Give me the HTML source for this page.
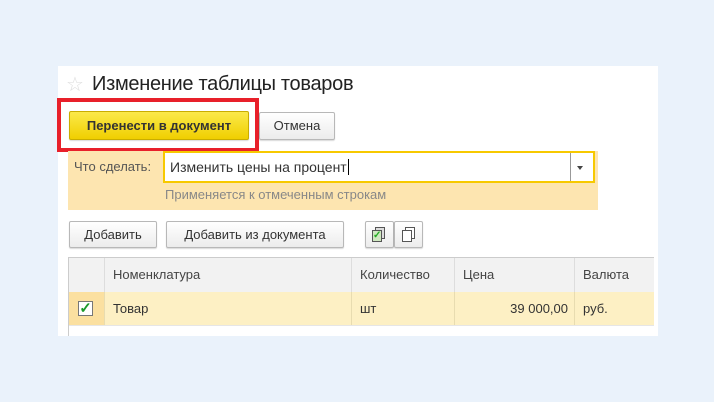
<!DOCTYPE html>
<html><head><meta charset="utf-8"><style>
*{margin:0;padding:0;box-sizing:border-box}
body{width:714px;height:402px;background:#eaf2fb;font-family:"Liberation Sans",sans-serif;position:relative;overflow:hidden}
.a{position:absolute}
.panel{left:58px;top:66px;width:600px;height:270px;background:#fff}
.btn{position:absolute;border:1px solid #b8b8b8;border-radius:2px;background:linear-gradient(#fff,#ececec);font-size:13px;color:#333;text-align:center;box-shadow:0 1px 1px rgba(0,0,0,.15)}
.th{position:absolute;top:258px;height:34px;background:#f2f2f2;border-right:1px solid #ddd;font-size:13px;color:#444;line-height:34px;padding-left:8px}
.td{position:absolute;top:292px;height:33px;background:#fdf0c4;border-right:1px solid #e8dcb0;font-size:13px;color:#333;line-height:33px;padding-left:8px}
</style></head><body>
<div class="a panel"></div>
<div class="a" style="left:66px;top:72px;font-size:20px;color:#ddd">☆</div>
<div class="a" style="left:92px;top:73px;font-size:20px;color:#222;letter-spacing:-0.3px">Изменение таблицы товаров</div>
<div class="a" style="left:57px;top:98px;width:202px;height:54px;border:4px solid #e8202a"></div>
<div class="btn" style="left:69px;top:111px;width:180px;height:29px;background:linear-gradient(#fbe94a,#f0cf00);border-color:#c9ad00;font-weight:bold;line-height:27px;color:#333">Перенести в документ</div>
<div class="btn" style="left:259px;top:112px;width:76px;height:28px;line-height:26px">Отмена</div>
<div class="a" style="left:68px;top:151px;width:530px;height:59px;background:#fde5b0"></div>
<div class="a" style="left:74px;top:159px;font-size:13px;color:#555">Что сделать:</div>
<div class="a" style="left:163px;top:151px;width:432px;height:32px;border:2px solid #f7c900;background:#fff"></div>
<div class="a" style="left:570px;top:153px;width:1px;height:28px;background:#999"></div>
<div class="a" style="left:577px;top:166px;border-left:3px solid transparent;border-right:3px solid transparent;border-top:4px solid #444"></div>
<div class="a" style="left:170px;top:159px;font-size:14px;color:#333">Изменить цены на процент<span style="border-left:1px solid #000;margin-left:1px"></span></div>
<div class="a" style="left:165px;top:187px;font-size:13px;color:#888">Применяется к отмеченным строкам</div>
<div class="btn" style="left:69px;top:221px;width:88px;height:27px;line-height:25px">Добавить</div>
<div class="btn" style="left:166px;top:221px;width:178px;height:27px;line-height:25px">Добавить из документа</div>
<div class="btn" style="left:365px;top:221px;width:29px;height:27px"></div>
<div class="btn" style="left:394px;top:221px;width:29px;height:27px"></div>
<div class="a" style="left:375px;top:227px;width:10px;height:12px;border:1px solid #555;background:#ddd"></div>
<div class="a" style="left:372px;top:230px;width:10px;height:12px;border:1px solid #555;background:#cfe8c0;color:#2a2;font-size:10px;line-height:10px;font-weight:bold">✓</div>
<div class="a" style="left:405px;top:227px;width:10px;height:12px;border:1px solid #555;background:#fff"></div>
<div class="a" style="left:402px;top:230px;width:10px;height:12px;border:1px solid #555;background:#fff"></div>
<div class="a" style="left:68px;top:257px;width:586px;height:79px;border-left:1px solid #ccc;border-top:1px solid #ccc"></div>
<div class="th" style="left:69px;width:36px"></div>
<div class="th" style="left:105px;width:247px">Номенклатура</div>
<div class="th" style="left:352px;width:103px">Количество</div>
<div class="th" style="left:455px;width:120px">Цена</div>
<div class="th" style="left:575px;width:79px;border-right:0">Валюта</div>
<div class="td" style="left:69px;width:36px;background:#fbe0a0"></div>
<div class="a" style="left:78px;top:301px;width:15px;height:15px;border:1px solid #777;background:#fff;color:#1a9a2a;font-size:15px;line-height:13px;font-weight:bold;text-align:center">✓</div>
<div class="td" style="left:105px;width:247px">Товар</div>
<div class="td" style="left:352px;width:103px">шт</div>
<div class="td" style="left:455px;width:120px;text-align:right;padding-right:6px">39 000,00</div>
<div class="td" style="left:575px;width:79px;border-right:0">руб.</div>
<div class="a" style="left:69px;top:325px;width:585px;height:1px;background:#e6e6e6"></div>
</body></html>
